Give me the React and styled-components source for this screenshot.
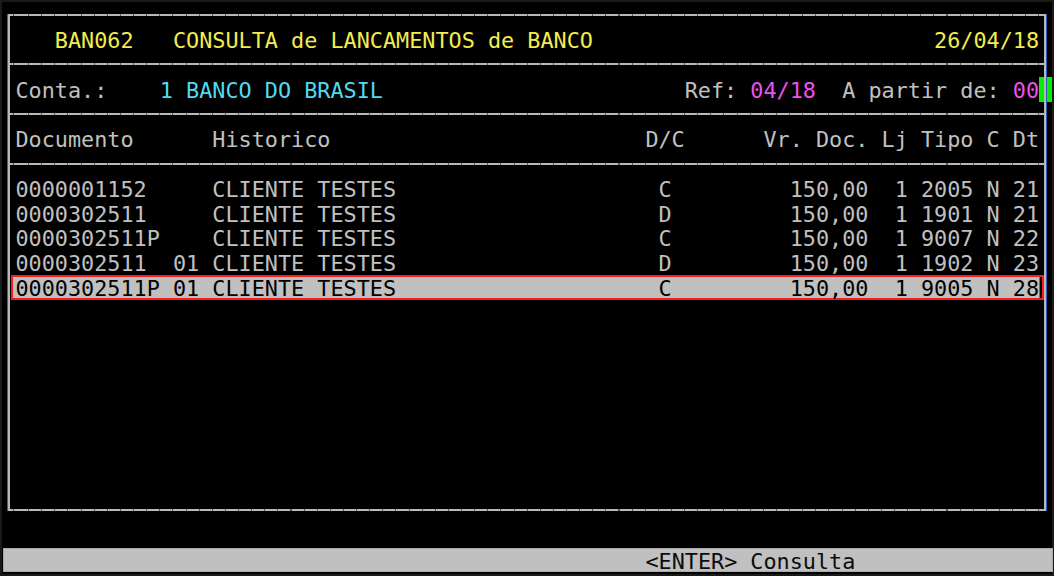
import React from 'react';
import styled, { createGlobalStyle, css } from 'styled-components';

const L = 24.78;
const HALF = L / 2 - 1;
const DROP = 2;

const C = {
  text: '#c0c0c0',
  yellow: '#f2ec4f',
  cyan: '#52d9ef',
  magenta: '#ec52ec',
  green: '#00f000',
  red: '#ff1a1a',
  bar: '#c0c0c0',
  ink: '#0c0c0c',
  rule: '#b8b8b8',
  tick: '#7c4536',
  blue: '#2d5fb8',
};

const GlobalStyle = createGlobalStyle`
  html, body { margin: 0; padding: 0; background: #000; }
  #root { width: 1054px; height: 576px; }
`;

const Terminal = styled.div`
  width: 1054px;
  height: 576px;
  box-sizing: border-box;
  overflow: hidden;
  padding-top: 2.6px;
  background: #000;
  box-shadow: inset 0 0 0 2px #1a1a1a;
  font-family: "DejaVu Sans Mono", "Liberation Mono", monospace;
  font-size: 21.8px;
  line-height: ${L}px;
  color: ${C.text};
`;

const Frame = styled.div`
  position: relative;
  margin: ${HALF}px 0 0 8px;
  width: 1038px;
  &::after {
    content: '';
    position: absolute;
    inset: 0;
    border-left: 2px solid ${C.rule};
    border-right: 2px solid ${C.rule};
    box-shadow: -1px 0 0 ${C.blue}, 1px 0 0 ${C.blue};
    pointer-events: none;
    z-index: 1;
  }
`;

const Rule = styled.div`
  height: 2px;
  background: repeating-linear-gradient(
    90deg,
    ${C.rule} 0 12.1px,
    ${C.tick} 12.1px 13.12px
  );
  background-position: 8px 0;
`;

const Section = styled.div`
  padding: ${HALF}px 0 ${HALF}px 7.5px;
  ${(p) => p.$rows && css`min-height: ${p.$rows * L}px;`}
`;

const Line = styled.div`
  display: flex;
  box-sizing: border-box;
  height: ${L}px;
  padding-top: ${DROP}px;
  width: 78ch;
  white-space: pre;
`;

const Field = styled.span`
  flex: none;
  ${(p) => p.$w && css`width: ${p.$w}ch;`}
  ${(p) => p.$indent && css`margin-left: ${p.$indent}ch;`}
  ${(p) => p.$push && css`margin-left: auto;`}
  color: ${(p) => p.$color || 'inherit'};
`;

const Cursor = styled.span`
  flex: none;
  width: 1ch;
  height: ${L}px;
  margin-top: -${DROP}px;
  background: ${C.green};
`;

const COLS = '15ch 33ch 3ch 14ch 3ch 5ch 2ch 3ch';

const HeaderRow = styled.div`
  display: grid;
  grid-template-columns: ${COLS};
  box-sizing: border-box;
  height: ${L}px;
  padding-top: ${DROP}px;
  white-space: pre;
`;

const DataRow = styled.div`
  display: grid;
  grid-template-columns: ${COLS};
  height: ${L}px;
  line-height: ${L - 4}px;
  box-sizing: border-box;
  white-space: pre;
  margin-left: -5px;
  width: 1033.5px;
  padding: ${DROP}px 0 0 3px;
  border: 2px solid transparent;
  ${(p) =>
    p.$selected &&
    css`
      position: relative;
      z-index: 2;
      border-color: ${C.red};
      color: #000;
      background: linear-gradient(${C.bar}, ${C.bar}) no-repeat;
      background-size: calc(78ch + 3px) 100%;
    `}
`;

const Cell = styled.span`
  text-align: ${(p) => p.$align || 'left'};
`;

const DocNo = styled.span`
  display: inline-block;
  width: 12ch;
`;

const StatusBar = styled.div`
  margin: ${1.5 * L - 1}px 0 0 3px;
  width: 1050px;
  height: ${L}px;
  box-sizing: border-box;
  background: ${C.bar};
  color: ${C.ink};
  border: 1px solid #a9a9a9;
  padding: ${DROP}px 0 0 calc(11.5px + 48ch);
  line-height: ${L - 2}px;
  white-space: pre;
`;

const rows = [
  { doc: '0000001152', seq: '', hist: 'CLIENTE TESTES', dc: 'C', val: '150,00', lj: '1', tipo: '2005', c: 'N', dt: '21' },
  { doc: '0000302511', seq: '', hist: 'CLIENTE TESTES', dc: 'D', val: '150,00', lj: '1', tipo: '1901', c: 'N', dt: '21' },
  { doc: '0000302511P', seq: '', hist: 'CLIENTE TESTES', dc: 'C', val: '150,00', lj: '1', tipo: '9007', c: 'N', dt: '22' },
  { doc: '0000302511', seq: '01', hist: 'CLIENTE TESTES', dc: 'D', val: '150,00', lj: '1', tipo: '1902', c: 'N', dt: '23' },
  { doc: '0000302511P', seq: '01', hist: 'CLIENTE TESTES', dc: 'C', val: '150,00', lj: '1', tipo: '9005', c: 'N', dt: '28', selected: true },
];

export default function App() {
  return (
    <>
      <GlobalStyle />
      <Terminal>
        <Frame>
          <Rule />
          <Section>
            <Line>
              <Field $indent={3} $w={9} $color={C.yellow}>BAN062</Field>
              <Field $color={C.yellow}>CONSULTA de LANCAMENTOS de BANCO</Field>
              <Field $push $color={C.yellow}>26/04/18</Field>
            </Line>
          </Section>
          <Rule />
          <Section>
            <Line>
              <Field $w={11}>Conta.:</Field>
              <Field $w={40} $color={C.cyan}>1 BANCO DO BRASIL</Field>
              <Field $w={5}>Ref:</Field>
              <Field $w={7} $color={C.magenta}>04/18</Field>
              <Field $w={13}>A partir de:</Field>
              <Field $w={2} $color={C.magenta}>00</Field>
              <Cursor />
            </Line>
          </Section>
          <Rule />
          <Section>
            <HeaderRow>
              <Cell>Documento</Cell>
              <Cell>Historico</Cell>
              <Cell>D/C</Cell>
              <Cell $align="right">Vr. Doc.</Cell>
              <Cell $align="right">Lj</Cell>
              <Cell $align="right">Tipo</Cell>
              <Cell $align="right">C</Cell>
              <Cell $align="right">Dt</Cell>
            </HeaderRow>
          </Section>
          <Rule />
          <Section $rows={13}>
            {rows.map((r, i) => (
              <DataRow key={i} $selected={r.selected}>
                <Cell>
                  <DocNo>{r.doc}</DocNo>
                  {r.seq}
                </Cell>
                <Cell>{r.hist}</Cell>
                <Cell $align="center">{r.dc}</Cell>
                <Cell $align="right">{r.val}</Cell>
                <Cell $align="right">{r.lj}</Cell>
                <Cell $align="right">{r.tipo}</Cell>
                <Cell $align="right">{r.c}</Cell>
                <Cell $align="right">{r.dt}</Cell>
              </DataRow>
            ))}
          </Section>
          <Rule />
        </Frame>
        <StatusBar>{'<ENTER> Consulta'}</StatusBar>
      </Terminal>
    </>
  );
}
